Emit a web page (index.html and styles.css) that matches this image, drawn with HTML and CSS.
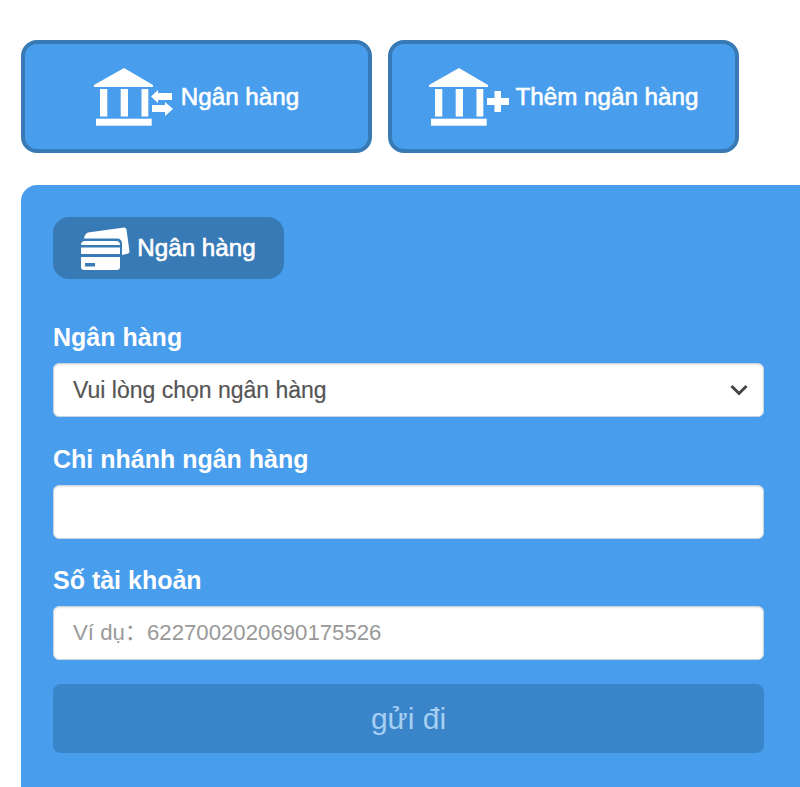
FILE: index.html
```html
<!DOCTYPE html>
<html lang="vi">

<head>
    <meta charset="UTF-8">
    <meta name="viewport" content="width=device-width, initial-scale=1.0">
    <title>Ngân hàng</title>
    <link rel="stylesheet" href="styles.css">
</head>

<body>
    <div class="tabs">
        <a class="tab" href="#">
            <svg class="tab-icon" viewBox="0 0 80 58" fill="#fff">
                <path d="M30 0L59 17V19H0V17Z" />
                <rect x="6" y="21" width="7.300" height="27.500" />
                <rect x="26.700" y="21" width="7.300" height="27.500" />
                <rect x="47.500" y="21" width="6.800" height="27.500" />
                <rect x="2" y="50.700" width="55.700" height="7" />
                <path d="M57 28.500L64 22V25H78V32H64V35Z" />
                <path d="M79 41L71 34V37H58V44H71V48Z" />
            </svg>
            <span>Ngân hàng</span>
        </a>
        <a class="tab" href="#">
            <svg class="tab-icon" viewBox="0 0 80 58" fill="#fff">
                <path d="M30 0L59 17V19H0V17Z" />
                <rect x="6" y="21" width="7.300" height="27.500" />
                <rect x="26.700" y="21" width="7.300" height="27.500" />
                <rect x="47.500" y="21" width="6.800" height="27.500" />
                <rect x="2" y="50.700" width="55.700" height="7" />
                <path d="M65.500 23H72V30H80V37H72V44H65.500V37H58V30H65.500Z" />
            </svg>
            <span>Thêm ngân hàng</span>
        </a>
    </div>

    <div class="panel">
        <div class="chip">
            <svg class="chip-icon" viewBox="0 0 49 43" fill="#fff">
                <path d="M7 5.500L43 0.500Q45 0.300 45.500 2.500L48.500 24.500Q48.500 26.500 46.500 26.800L41 28V17Q41 11.500 36 11.500H3Q3.500 7 7 5.500Z" />
                <path d="M0 18Q0 14 4 14H35Q39 14 39 18Z" />
                <path d="M0 20.500H39V27H0Z" />
                <path fill-rule="evenodd" d="M0 30H39V40Q39 43 36 43H3Q0 43 0 40ZM4 36V39.500H14V36Z" />
            </svg>
            <span>Ngân hàng</span>
        </div>

        <form class="bank-form">
            <label class="field">
                <span class="field-label">Ngân hàng</span>
                <span class="select-wrap">
                    <select class="control control-select">
                        <option>Vui lòng chọn ngân hàng</option>
                    </select>
                    <svg class="chevron" viewBox="0 0 18 12" fill="none" stroke="#444" stroke-width="3">
                        <path d="M1.500 2L9 9.500L16.500 2" />
                    </svg>
                </span>
            </label>
            <label class="field">
                <span class="field-label">Chi nhánh ngân hàng</span>
                <input class="control" type="text">
            </label>
            <label class="field">
                <span class="field-label">Số tài khoản</span>
                <input class="control" type="text" placeholder="Ví dụ：6227002020690175526">
            </label>
            <button class="submit" type="button">gửi đi</button>
        </form>
    </div>
</body>

</html>
```

FILE: styles.css
```css
* {
    margin: 0;
    padding: 0;
    box-sizing: border-box;
}

body {
    padding: 40px 0 0 21px;
    background-color: #fff;
    font-family: "Liberation Sans", "Noto Sans CJK SC", sans-serif;
    overflow: hidden;
}

.tabs {
    display: flex;
    gap: 16px;
    margin-bottom: 32px;
}

.tab {
    display: flex;
    align-items: center;
    justify-content: center;
    gap: 7px;
    width: 351px;
    height: 113px;
    border: 4px solid #387ab5;
    border-radius: 16px;
    background-color: #489dec;
    color: #fff;
    font-size: 24.2px;
    text-decoration: none;
    -webkit-text-stroke: 0.6px #fff;
}

.tab-icon {
    width: 80px;
    height: 58px;
}

.panel {
    padding: 32px 36px 34px 32px;
    border-top-left-radius: 16px;
    background-color: #489dec;
}

.chip {
    display: flex;
    align-items: center;
    justify-content: center;
    gap: 7px;
    width: 231px;
    height: 62px;
    margin-bottom: 44px;
    border-radius: 16px;
    background-color: #387ab5;
    color: #fff;
    font-size: 24.2px;
    -webkit-text-stroke: 0.6px #fff;
}

.chip-icon {
    width: 49px;
    height: 43px;
}

.bank-form {
    display: flex;
    flex-direction: column;
}

.field {
    display: block;
}

.field + .field {
    margin-top: 27.5px;
}

.field-label {
    display: block;
    height: 40px;
    color: #fff;
    font-size: 25px;
    font-weight: bold;
    line-height: 29px;
}

.select-wrap {
    display: block;
    position: relative;
}

.control {
    display: block;
    width: 100%;
    height: 54px;
    padding: 0 19px;
    border: 1px solid #c8d4de;
    border-radius: 6px;
    outline: none;
    appearance: none;
    background-color: #fff;
    box-shadow: inset 0 1px 2px rgba(0, 0, 0, 0.1);
    color: #555;
    font-family: inherit;
    font-size: 22.2px;
}

.control-select {
    font-size: 23px;
    -webkit-text-stroke: 0.2px #555;
}

.control::placeholder {
    color: #999;
    opacity: 1;
}

.chevron {
    position: absolute;
    top: 21px;
    right: 16px;
    width: 18px;
    height: 12px;
}

.submit {
    height: 69px;
    margin-top: 24px;
    border: none;
    border-radius: 8px;
    background-color: #3a84c9;
    color: #a5d0f3;
    font-family: inherit;
    font-size: 30px;
}
```
